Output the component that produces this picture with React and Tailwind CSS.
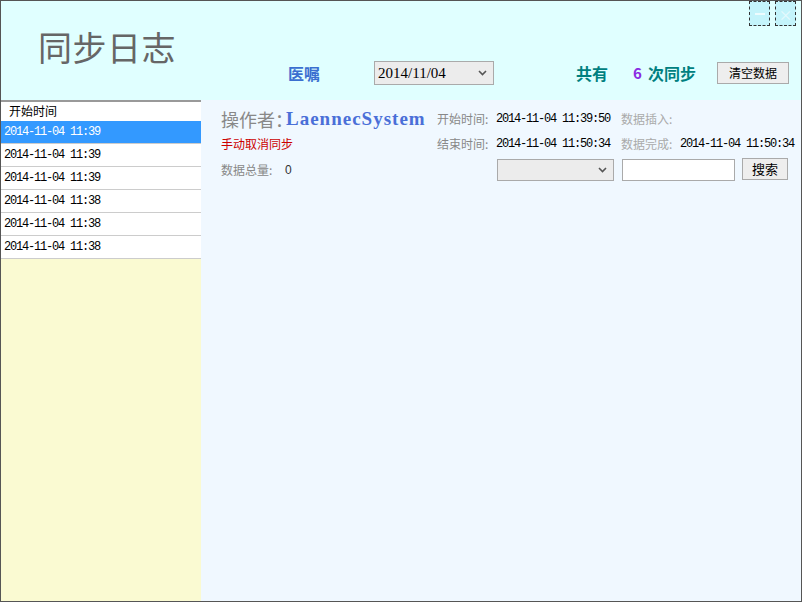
import React from 'react';

const cjk = { fontFamily: '"Noto Sans CJK SC", "Liberation Sans", sans-serif' };
const mono = { fontFamily: '"Liberation Mono", "Noto Sans CJK SC", monospace' };

const rows = [
  '2014-11-04 11:39',
  '2014-11-04 11:39',
  '2014-11-04 11:39',
  '2014-11-04 11:38',
  '2014-11-04 11:38',
  '2014-11-04 11:38',
];

function Chevron() {
  return (
    <svg width="9" height="6" viewBox="0 0 9 6" className="shrink-0">
      <path d="M1 1 L4.5 4.5 L8 1" fill="none" stroke="#555" strokeWidth="1.6" />
    </svg>
  );
}

function App() {
  return (
    <div className="w-[802px] h-[602px] border border-[#555] flex flex-col overflow-hidden relative" style={cjk}>
      {/* window buttons */}
      <div className="absolute top-0 right-[5px] flex gap-[5px]">
        <div className="w-[21px] h-[25px] border border-dashed border-[#333] bg-[#c4f4fb] flex items-center justify-center">
          <div className="w-[10px] h-[2px] bg-white/70"></div>
        </div>
        <div className="w-[21px] h-[25px] border border-dashed border-[#333] bg-[#c4f4fb] flex items-center justify-center text-white/60 text-[14px] leading-none">
          ×
        </div>
      </div>

      {/* Header */}
      <div className="h-[99px] bg-[#e0ffff] flex items-start shrink-0">
        <div className="w-[250px] pl-[37px] pt-[24px] text-[34px] leading-[44px] tracking-[0.5px] text-[#666]">
          同步日志
        </div>
        <div className="mt-[60px] flex items-center h-[24px]">
          <span className="ml-[37px] text-[16px] font-bold text-[#3a6fd0]">医嘱</span>
          <div className="ml-[54px] w-[120px] h-[24px] border border-[#aaa] bg-[#ececec] flex items-center justify-between pl-[3px] pr-[6px]">
            <span className="text-[15px] text-black" style={{ fontFamily: '"Liberation Serif", serif' }}>2014/11/04</span>
            <Chevron />
          </div>
          <span className="ml-[82px] text-[16px] font-bold text-[#008080]">共有</span>
          <span className="ml-[25px] text-[15px] font-bold text-[#8a2be2]">6</span>
          <span className="ml-[6px] text-[16px] font-bold text-[#008080]">次同步</span>
          <button className="ml-[21px] w-[72px] h-[22px] border border-[#aaa] bg-[#eeeeee] text-[12px] text-black">
            清空数据
          </button>
        </div>
      </div>

      {/* Body */}
      <div className="flex flex-1">
        {/* Left list */}
        <div className="w-[200px] bg-[#fafad2] flex flex-col">
          <div className="h-[21px] bg-white border-t-2 border-[#999] pl-[8px] text-[12px] leading-[18px] text-black">
            开始时间
          </div>
          {rows.map((r, i) => (
            <div
              key={i}
              className={`h-[23px] pl-[3px] flex items-center text-[12px] tracking-[-1.2px] border-b border-[#ccc] ${
                i === 0 ? 'bg-[#3399ff] text-white' : 'bg-white text-black'
              }`}
              style={mono}
            >
              {r}
            </div>
          ))}
        </div>

        {/* Right detail */}
        <div className="flex-1 bg-[#f0f8ff] pl-[20px] pt-[7px] text-[12px]">
          <div className="flex items-center h-[24px]">
            <div className="w-[216px] flex items-center">
              <span className="text-[18px] text-[#888]">操作者：</span>
              <span className="-ml-[7px] text-[19px] font-bold text-[#4a6fd8] tracking-[1px]" style={{ fontFamily: '"Liberation Serif", serif' }}>
                LaennecSystem
              </span>
            </div>
            <span className="w-[59px] text-[#888]">开始时间:</span>
            <span className="w-[125px] tracking-[-1.2px] text-black" style={mono}>2014-11-04 11:39:50</span>
            <span className="text-[#aaa]">数据插入:</span>
          </div>
          <div className="flex items-center h-[24px] mt-[1px]">
            <span className="w-[216px] text-[#cc0000]">手动取消同步</span>
            <span className="w-[59px] text-[#888]">结束时间:</span>
            <span className="w-[125px] tracking-[-1.2px] text-black" style={mono}>2014-11-04 11:50:34</span>
            <span className="w-[59px] text-[#aaa]">数据完成:</span>
            <span className="tracking-[-1.2px] text-black" style={mono}>2014-11-04 11:50:34</span>
          </div>
          <div className="flex items-center h-[24px] mt-[2px]">
            <span className="w-[64px] text-[#888]">数据总量:</span>
            <span className="w-[212px] text-[#333]" style={{ fontFamily: '"Liberation Sans", sans-serif' }}>0</span>
            <div className="w-[117px] h-[22px] border border-[#aaa] bg-[#ececec] flex items-center justify-end pr-[6px]">
              <Chevron />
            </div>
            <div className="ml-[8px] w-[113px] h-[22px] border border-[#aaa] bg-white"></div>
            <button className="ml-[7px] w-[46px] h-[22px] border border-[#aaa] bg-[#eeeeee] text-[13px] text-black -mt-[2px]">
              搜索
            </button>
          </div>
        </div>
      </div>
    </div>
  );
}

export default App;
